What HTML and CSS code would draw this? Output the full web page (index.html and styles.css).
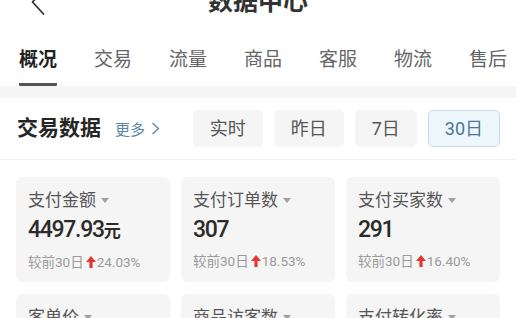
FILE: index.html
```html
<!DOCTYPE html>
<html lang="zh-CN">
<head>
    <meta charset="UTF-8">
    <meta name="viewport" content="width=device-width, initial-scale=1.0">
    <title>数据中心</title>
    <link rel="stylesheet" href="styles.css">
</head>
<body>

    <header class="nav-bar">
        <div class="nav-left">
            <svg class="back-icon" width="14" height="26" viewBox="0 0 14 26">
                <polyline points="12.5,1 1.5,13 12.5,25" fill="none" stroke="#333" stroke-width="1.8" stroke-linecap="round" stroke-linejoin="round"/>
            </svg>
        </div>
        <h1 class="nav-title">数据中心</h1>
        <div></div>
    </header>

    <nav class="tabs">
        <span class="tab active">概况</span>
        <span class="tab">交易</span>
        <span class="tab">流量</span>
        <span class="tab">商品</span>
        <span class="tab">客服</span>
        <span class="tab">物流</span>
        <span class="tab">售后</span>
    </nav>

    <div class="divider-band"></div>

    <section class="trade-section">
        <div class="section-head">
            <h2 class="section-title">交易数据</h2>
            <a class="more-link" href="#">更多
                <svg width="9" height="13" viewBox="0 0 9 13">
                    <polyline points="1.5,1 7.5,6.5 1.5,12" fill="none" stroke="#5b87a8" stroke-width="1.3"/>
                </svg>
            </a>
            <div class="range-buttons">
                <button class="range-btn">实时</button>
                <button class="range-btn">昨日</button>
                <button class="range-btn">7日</button>
                <button class="range-btn selected">30日</button>
            </div>
        </div>

        <!-- metric cards -->
        <div class="card-grid">
            <div class="metric-card">
                <div class="metric-label">支付金额 <span class="caret"></span></div>
                <div class="metric-value">4497.93<span class="unit">元</span></div>
                <div class="metric-compare">较前30日
                    <svg class="up-arrow" width="10" height="12" viewBox="0 0 10 12"><path d="M5 0 L10 6 L6.6 6 L6.6 12 L3.4 12 L3.4 6 L0 6 Z" fill="#e3382d"/></svg>24.03%
                </div>
            </div>
            <div class="metric-card">
                <div class="metric-label">支付订单数 <span class="caret"></span></div>
                <div class="metric-value">307</div>
                <div class="metric-compare">较前30日
                    <svg class="up-arrow" width="10" height="12" viewBox="0 0 10 12"><path d="M5 0 L10 6 L6.6 6 L6.6 12 L3.4 12 L3.4 6 L0 6 Z" fill="#e3382d"/></svg>18.53%
                </div>
            </div>
            <div class="metric-card">
                <div class="metric-label">支付买家数 <span class="caret"></span></div>
                <div class="metric-value">291</div>
                <div class="metric-compare">较前30日
                    <svg class="up-arrow" width="10" height="12" viewBox="0 0 10 12"><path d="M5 0 L10 6 L6.6 6 L6.6 12 L3.4 12 L3.4 6 L0 6 Z" fill="#e3382d"/></svg>16.40%
                </div>
            </div>
            <div class="metric-card">
                <div class="metric-label">客单价 <span class="caret"></span></div>
                <div class="metric-value">15.46<span class="unit">元</span></div>
                <div class="metric-compare">较前30日</div>
            </div>
            <div class="metric-card">
                <div class="metric-label">商品访客数 <span class="caret"></span></div>
                <div class="metric-value">3126</div>
                <div class="metric-compare">较前30日</div>
            </div>
            <div class="metric-card">
                <div class="metric-label">支付转化率 <span class="caret"></span></div>
                <div class="metric-value">9.31%</div>
                <div class="metric-compare">较前30日</div>
            </div>
        </div>
    </section>

</body>
</html>
```

FILE: styles.css
```css
/* Base */
html, body {
    margin: 0;
    padding: 0;
    background-color: #fff;
    color: #333;
    font-family: Roboto, "Noto Sans CJK SC", sans-serif;
    overflow: hidden;
}

/* Top navigation bar */
.nav-bar {
    display: grid;
    grid-template-columns: 1fr auto 1fr;
    align-items: center;
    height: 44px;
    margin-top: -20px; /* page is scrolled a little */
}

.nav-left {
    padding-left: 31px;
    display: flex;
    align-items: center;
}

.back-icon {
    display: block;
}

.nav-title {
    margin: 0;
    font-size: 25px;
    font-weight: bold;
    line-height: 44px;
    color: #333;
}

/* Tabs */
.tabs {
    display: flex;
    gap: 37px;
    padding-left: 19px;
    white-space: nowrap;
}

.tab {
    font-size: 19px;
    line-height: 24px;
    padding: 24px 0 11px;
    color: #666;
    border-bottom: 3px solid transparent;
}

.tab.active {
    color: #222;
    font-weight: bold;
    border-bottom-color: #555;
    border-radius: 0 0 1px 1px;
}

.divider-band {
    height: 12px;
    background-color: #f5f5f5;
}

/* Trade data section */
.section-head {
    display: flex;
    align-items: center;
    padding: 12px 16px 12px 17px;
    border-bottom: 1px solid #f0f0f0;
}

.section-title {
    margin: 0;
    font-size: 21px;
    font-weight: bold;
    color: #262626;
    line-height: 37px;
}

.more-link {
    display: flex;
    align-items: center;
    gap: 6px;
    margin-left: 14px;
    font-size: 15px;
    color: #5b87a8;
    text-decoration: none;
}

.range-buttons {
    display: flex;
    gap: 11px;
    margin-left: auto;
}

.range-btn {
    font-family: Roboto, "Noto Sans CJK SC", sans-serif;
    font-size: 18px;
    line-height: 35px;
    padding: 0 16px;
    color: #555;
    background-color: #f5f5f5;
    border: 1px solid #f5f5f5;
    border-radius: 5px;
}

.range-btn.selected {
    color: #4b7896;
    background-color: #eef7fc;
    border-color: #c4dce8;
}

/* Metric cards */
.card-grid {
    display: grid;
    grid-template-columns: repeat(3, 1fr);
    column-gap: 11px;
    row-gap: 12px;
    padding: 17px 16px 0;
}

.metric-card {
    background-color: #f5f5f5;
    border-radius: 6px;
    padding: 11px 12px;
}

.metric-label {
    display: flex;
    align-items: center;
    font-size: 17px;
    line-height: 24px;
    color: #555;
}

.caret {
    width: 0;
    height: 0;
    margin-left: 5px;
    border-left: 4px solid transparent;
    border-right: 4px solid transparent;
    border-top: 5px solid #a0a0a0;
}

.metric-value {
    margin-top: 4px;
    font-size: 23px;
    font-weight: 500;
    line-height: 28px;
    letter-spacing: -1.3px;
    color: #2b2b2b;
}

.metric-value .unit {
    font-size: 17px;
    font-weight: bold;
    letter-spacing: 0;
}

.metric-compare {
    display: flex;
    align-items: center;
    margin-top: 8px;
    font-size: 13.5px;
    line-height: 18px;
    color: #9a9a9a;
}

.up-arrow {
    margin: 0 1px 0 2px;
}
```
